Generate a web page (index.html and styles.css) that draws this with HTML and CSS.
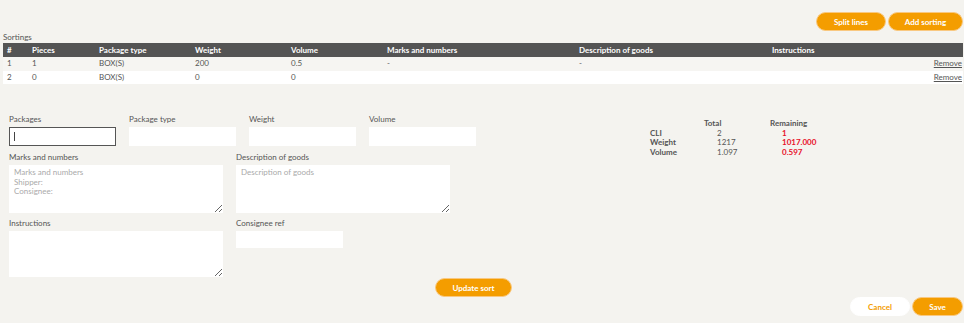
FILE: index.html
```html
<!DOCTYPE html>
<html>
<head>
<meta charset="utf-8">
<link rel="stylesheet" href="styles.css">
</head>
<body>
<div class="page">
  <div class="toolbar">
    <button class="btn">Split lines</button>
    <button class="btn">Add sorting</button>
  </div>
  <div class="section-title">Sortings</div>
  <table class="sortings">
    <thead>
      <tr>
        <th class="c-no">#</th>
        <th class="c-pieces">Pieces</th>
        <th class="c-type">Package type</th>
        <th class="c-weight">Weight</th>
        <th class="c-volume">Volume</th>
        <th class="c-marks">Marks and numbers</th>
        <th class="c-desc">Description of goods</th>
        <th class="c-instr">Instructions</th>
        <th class="c-action"></th>
      </tr>
    </thead>
    <tbody>
      <tr class="odd">
        <td>1</td><td>1</td><td>BOX(S)</td><td>200</td><td>0.5</td><td>-</td><td>-</td><td></td>
        <td class="c-action"><a class="remove">Remove</a></td>
      </tr>
      <tr class="even">
        <td>2</td><td>0</td><td>BOX(S)</td><td>0</td><td>0</td><td></td><td></td><td></td>
        <td class="c-action"><a class="remove">Remove</a></td>
      </tr>
    </tbody>
  </table>

  <div class="editor">
    <div class="form">
      <div class="row4">
        <div class="field">
          <div class="label">Packages</div>
          <div class="input-wrap"><input class="input focused" type="text"><span class="caret"></span></div>
        </div>
        <div class="field">
          <div class="label">Package type</div>
          <input class="input" type="text">
        </div>
        <div class="field">
          <div class="label">Weight</div>
          <input class="input" type="text">
        </div>
        <div class="field">
          <div class="label">Volume</div>
          <input class="input" type="text">
        </div>
      </div>
      <div class="row2">
        <div class="field">
          <div class="label">Marks and numbers</div>
          <textarea class="area" placeholder="Marks and numbers&#10;Shipper:&#10;Consignee:"></textarea>
        </div>
        <div class="field">
          <div class="label">Description of goods</div>
          <textarea class="area" placeholder="Description of goods"></textarea>
        </div>
      </div>
      <div class="row2 row-last">
        <div class="field">
          <div class="label">Instructions</div>
          <textarea class="area area-instr"></textarea>
        </div>
        <div class="field">
          <div class="label">Consignee ref</div>
          <input class="input input-ref" type="text">
        </div>
      </div>
    </div>
    <div class="summary">
      <div class="s-head"></div><div class="s-head">Total</div><div class="s-head">Remaining</div>
      <div class="s-label">CLI</div><div class="s-val">2</div><div class="s-rem">1</div>
      <div class="s-label">Weight</div><div class="s-val">1217</div><div class="s-rem">1017.000</div>
      <div class="s-label">Volume</div><div class="s-val">1.097</div><div class="s-rem">0.597</div>
    </div>
  </div>

  <div class="update-row">
    <button class="btn btn-update">Update sort</button>
  </div>
  <div class="footer">
    <button class="btn btn-cancel">Cancel</button>
    <button class="btn btn-save">Save</button>
  </div>
</div>
</body>
</html>
```

FILE: styles.css
```css
* { box-sizing: border-box; }
html, body {
  margin: 0;
  padding: 0;
  background: #f4f3ef;
}
body {
  font-family: Lato, "Liberation Sans", sans-serif;
  font-size: 8px;
  color: #555;
  width: 964px;
  height: 323px;
  overflow: hidden;
}
.page {
  padding: 0 1px 0 3px;
}
.toolbar {
  display: flex;
  justify-content: flex-end;
  gap: 2px;
  padding-top: 12px;
  height: 31px;
}
.btn {
  font-family: Lato, "Liberation Sans", sans-serif;
  font-weight: 700;
  font-size: 8px;
  color: #fff;
  background: #f49d00;
  border: 1px solid #f9c880;
  border-radius: 10px;
  height: 19px;
  padding: 0;
  cursor: pointer;
}
.toolbar .btn:first-child { width: 70px; }
.toolbar .btn:last-child { width: 75px; }
.section-title {
  height: 12px;
  line-height: 12px;
  color: #555;
}
.sortings {
  width: 960px;
  border-collapse: collapse;
  table-layout: fixed;
}
.sortings th {
  background: #545454;
  color: #fff;
  font-weight: 700;
  text-align: left;
  height: 14px;
  padding: 0 0 0 4px;
  line-height: 14px;
  white-space: nowrap;
}
.sortings td {
  height: 13.5px;
  padding: 0 0 0 4px;
  line-height: 13px;
  color: #555;
  white-space: nowrap;
}
.c-no { width: 25px; }
.c-pieces { width: 67px; }
.c-type { width: 96px; }
.c-weight { width: 96px; }
.c-volume { width: 96px; }
.c-marks { width: 192px; }
.c-desc { width: 193px; }
.c-instr { width: 150px; }
.sortings td.c-action {
  text-align: right;
  padding-right: 1px;
}
.sortings tr.odd td { background: #f6f5f2; }
.sortings tr.even td { background: #fff; }
.remove {
  color: #555;
  text-decoration: underline;
}

.editor {
  display: flex;
  padding-top: 31px;
}
.form {
  width: 647px;
  padding-left: 6px;
}
.row4 {
  display: flex;
  gap: 13px;
}
.row4 .field { width: 107px; }
.row2 {
  display: flex;
  gap: 13px;
  margin-top: 7px;
}
.row2 .field { width: 214px; }
.label {
  height: 9px;
  line-height: 9px;
  margin-bottom: 3px;
  color: #555;
}
.input {
  display: block;
  width: 107px;
  height: 19px;
  border: none;
  background: #fff;
  outline: none;
  margin: 0;
  padding: 0;
}
.input-wrap {
  position: relative;
}
.input.focused {
  border: 1px solid #555;
}
.caret {
  position: absolute;
  left: 5px;
  top: 5px;
  width: 1px;
  height: 9px;
  background: #444;
}
.area {
  display: block;
  width: 214px;
  height: 48px;
  border: none;
  background: #fff;
  margin: 0;
  padding: 3px 5px;
  font-family: Lato, "Liberation Sans", sans-serif;
  font-size: 8px;
  line-height: 9.5px;
  color: #555;
}
.area::placeholder { color: #aaa; }
.area-instr { height: 46px; }
.row-last { margin-top: 6px; }
.input-ref { width: 107px; height: 17px; }

.summary {
  display: grid;
  grid-template-columns: 54px 66px 60px;
  grid-auto-rows: 9.7px;
  align-content: start;
  margin-top: 3px;
  line-height: 10px;
}
.s-head { font-weight: 700; color: #555; }
.s-label { font-weight: 700; color: #555; }
.s-val { padding-left: 13px; color: #555; }
.s-rem { padding-left: 12px; color: #e8102a; font-weight: 700; }

.update-row {
  display: flex;
  padding-left: 432px;
  margin-top: 1px;
}
.btn-update { width: 77px; }
.footer {
  display: flex;
  justify-content: flex-end;
  gap: 2px;
  margin-top: 0;
}
.btn-cancel {
  width: 60px;
  background: #fff;
  color: #f49d00;
  border-color: #fff;
}
.btn-save { width: 51px; }
```
